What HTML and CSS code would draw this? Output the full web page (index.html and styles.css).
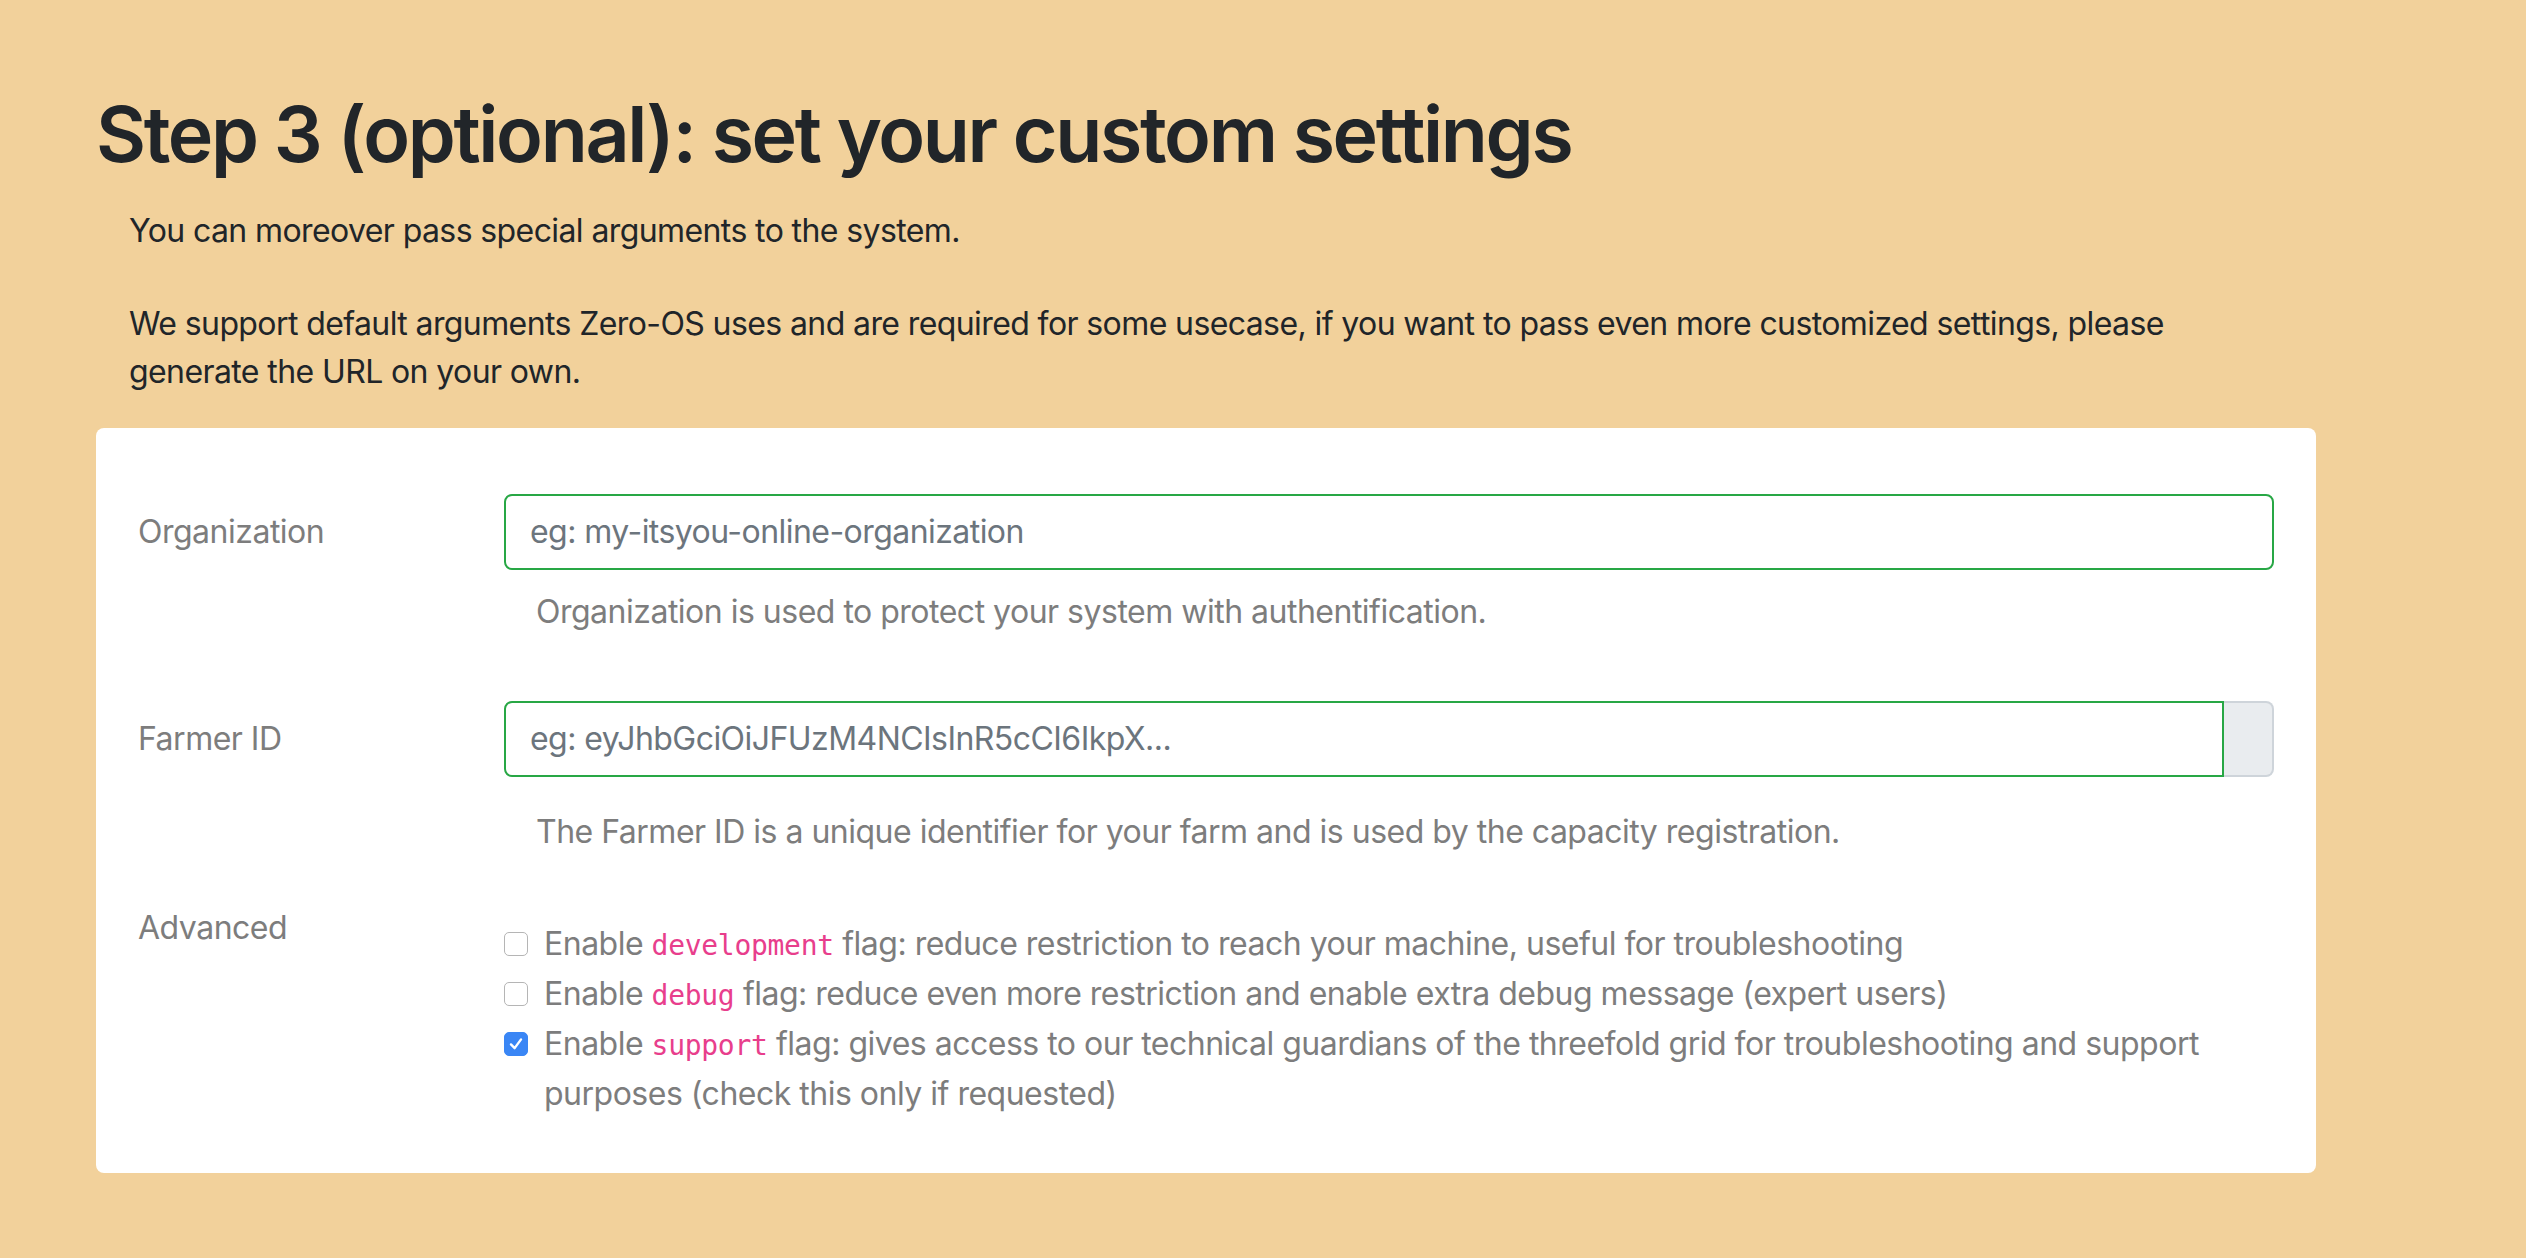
FILE: index.html
```html
<!DOCTYPE html>
<html lang="en">
<head>
<meta charset="utf-8">
<title>Step 3 (optional): set your custom settings</title>
<link rel="stylesheet" href="styles.css">
</head>
<body>
<div class="page">
  <h1 class="title">Step 3 (optional): set your custom settings</h1>
  <p class="intro first">You can moreover pass special arguments to the system.</p>
  <p class="intro">We support default arguments Zero-OS uses and are required for some usecase, if you want to pass even more customized settings, please generate the URL on your own.</p>

  <div class="card">
    <div class="row">
      <label class="row-label">Organization</label>
      <div class="row-field">
        <div class="input valid"><span class="placeholder">eg: my-itsyou-online-organization</span></div>
        <div class="help">Organization is used to protect your system with authentification.</div>
      </div>
    </div>

    <div class="row row-farmer">
      <label class="row-label">Farmer ID</label>
      <div class="row-field">
        <div class="input-group">
          <div class="input valid grouped"><span class="placeholder">eg: eyJhbGciOiJFUzM4NCIsInR5cCI6IkpX...</span></div>
          <div class="append"></div>
        </div>
        <div class="help help-farmer">The Farmer ID is a unique identifier for your farm and is used by the capacity registration.</div>
      </div>
    </div>

    <div class="row row-advanced">
      <label class="row-label label-advanced">Advanced</label>
      <div class="row-field checks">
        <div class="check">
          <span class="box"></span>
          <span class="check-text">Enable <code>development</code> flag: reduce restriction to reach your machine, useful for troubleshooting</span>
        </div>
        <div class="check">
          <span class="box"></span>
          <span class="check-text">Enable <code>debug</code> flag: reduce even more restriction and enable extra debug message (expert users)</span>
        </div>
        <div class="check">
          <span class="box checked"><svg viewBox="0 0 24 24" width="24" height="24"><path d="M6.5 12.5 L10.5 16.5 L17.5 7" fill="none" stroke="#fff" stroke-width="2.6" stroke-linecap="round" stroke-linejoin="round"/></svg></span>
          <span class="check-text"><span>Enable <code>support</code> flag: gives access to our technical guardians of the threefold grid for troubleshooting and support</span> <span>purposes (check this only if requested)</span></span>
        </div>
      </div>
    </div>
  </div>
</div>
</body>
</html>
```

FILE: styles.css
```css
html, body {
  margin: 0;
  padding: 0;
}

body {
  background: #f2d19b;
  font-family: Inter, "Noto Sans", "Liberation Sans", sans-serif;
  color: #212529;
  font-size: 32px;
  line-height: 48px;
  min-height: 1258px;
}

.page {
  padding: 0 210px 80px 96px;
}

.title {
  margin: 86px 0 25px 0;
  font-size: 77px;
  line-height: 96px;
  font-weight: 600;
  color: #212529;
  letter-spacing: -2.35px;
}

.intro {
  margin: 0 32px 32px 33px;
  font-size: 32px;
  line-height: 48px;
  letter-spacing: -0.6px;
}

.intro.first {
  margin-bottom: 45px;
}

.card {
  background: #ffffff;
  border-radius: 8px;
  padding: 66px 42px 55px 42px;
}

.row {
  display: grid;
  grid-template-columns: 366px 1fr;
}

.row-farmer {
  margin-top: 65px;
}

.row-advanced {
  margin-top: 32px;
}

.row-label {
  padding-top: 14px;
  color: #7d7d7d;
  letter-spacing: -0.5px;
}

.label-advanced {
  padding-top: 16px;
}

.input {
  height: 76px;
  box-sizing: border-box;
  border: 2px solid #28a745;
  border-radius: 8px;
  padding: 0 24px;
  display: flex;
  align-items: center;
  background: #fff;
}

.placeholder {
  color: #6c757d;
  letter-spacing: -0.55px;
}

.input-group {
  display: flex;
}

.input.grouped {
  flex: 1;
  border-top-right-radius: 0;
  border-bottom-right-radius: 0;
}

.append {
  width: 50px;
  height: 76px;
  box-sizing: border-box;
  background: #e9ecef;
  border: 2px solid #ced4da;
  border-left: none;
  border-radius: 0 8px 8px 0;
}

.help {
  margin-top: 18px;
  padding-left: 32px;
  color: #7d7d7d;
  letter-spacing: -0.5px;
}

.help-farmer {
  margin-top: 31px;
}

.checks {
  padding-top: 32px;
}

.check {
  display: flex;
  align-items: flex-start;
  color: #7d7d7d;
  letter-spacing: -0.5px;
}

.box {
  flex: none;
  width: 24px;
  height: 24px;
  box-sizing: border-box;
  margin-top: 12px;
  margin-right: 16px;
  border: 1.5px solid #b5b5b5;
  border-radius: 5px;
  background: #fff;
  display: flex;
  align-items: center;
  justify-content: center;
}

.box.checked {
  background: #3a86f5;
  border-color: #3a86f5;
}

.box svg {
  display: block;
}

code {
  font-family: "DejaVu Sans Mono", "Liberation Mono", monospace;
  font-size: 28px;
  color: #e83e8c;
  letter-spacing: -0.3px;
}
```
